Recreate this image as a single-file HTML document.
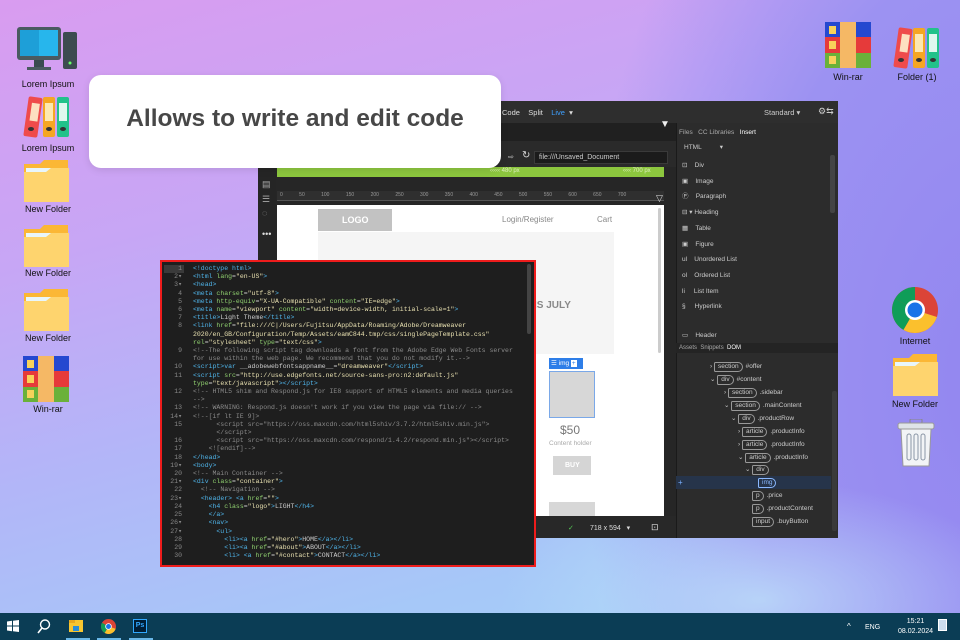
<!DOCTYPE html>
<html><head><meta charset="utf-8">
<style>
*{margin:0;padding:0;box-sizing:border-box}
body{width:960px;height:640px;overflow:hidden;position:relative;font-family:"Liberation Sans",sans-serif;
background:linear-gradient(165deg,#d99cf0 0%,#c7a6f5 30%,#b2b6f8 55%,#a6c8f8 80%,#a2d2f6 100%);}
.abs{position:absolute}
.bgR{position:absolute;left:0;top:0;width:960px;height:640px;background:radial-gradient(ellipse 420px 700px at 1000px 380px,#9286f0 0%,#9c92f2 60%,rgba(160,150,245,0) 100%);}
.bgW{position:absolute;left:0;top:0;width:960px;height:640px;background:radial-gradient(ellipse 260px 120px at 760px 600px,rgba(190,225,250,.8),rgba(190,225,250,0));}
.lbl{position:absolute;font-size:9px;color:#111;text-align:center;width:80px;}
.win{left:258px;top:101px;width:580px;height:437px;background:#262626}
.t{position:absolute;font-size:7px;color:#ccc;white-space:nowrap}
.code{left:160px;top:260px;width:376px;height:307px;background:#1e1e1e;border:2px solid #ee1c1c;overflow:hidden}
pre{font-family:"Liberation Mono",monospace;font-size:6.5px;line-height:8.2px;color:#ccc;position:absolute}
.tg{color:#4fb3e8}.at{color:#8fcf6f}.st{color:#e8e0b0}.cm{color:#8a8a8a}
.dom{position:absolute;font-size:6.5px;color:#ccc;white-space:nowrap}
.tag{display:inline-block;border:1px solid #999;border-radius:2px 6px 6px 2px;padding:0 3px;margin-right:3px;color:#ccc;font-size:6.5px;line-height:8px}
</style></head><body>
<div class="bgR"></div><div class="bgW"></div>

<svg class="abs" style="left:15px;top:27px" width="64" height="48" viewBox="0 0 64 48">
<rect x="2" y="0" width="44" height="33" rx="3" fill="#4a5a60"/><rect x="5" y="3" width="38" height="26" fill="#27b6ec"/><rect x="5" y="3" width="19" height="26" fill="#1e9fd8"/>
<rect x="19" y="33" width="10" height="7" fill="#3a4a50"/><rect x="12" y="40" width="24" height="3" fill="#4a5a60"/>
<rect x="48" y="5" width="14" height="37" rx="2" fill="#3d4b50"/><circle cx="55" cy="36" r="1.5" fill="#6f6"/></svg>
<div class="lbl" style="left:8px;top:79px">Lorem Ipsum</div>
<svg class="abs" style="left:23px;top:95px" width="48" height="44" viewBox="0 0 48 44">
<rect x="3" y="2" width="14" height="40" rx="2" fill="#ef4b4b" transform="rotate(8 10 22)"/><rect x="20" y="2" width="12" height="40" rx="2" fill="#f5a623"/><rect x="34" y="2" width="12" height="40" rx="2" fill="#22c28a"/>
<rect x="22" y="8" width="8" height="18" fill="#fde8b0"/><rect x="36" y="8" width="8" height="18" fill="#e0f8ee"/><rect x="7" y="8" width="8" height="18" fill="#fde0c0" transform="rotate(8 10 22)"/>
<ellipse cx="26" cy="34" rx="3" ry="2" fill="#333"/><ellipse cx="40" cy="34" rx="3" ry="2" fill="#333"/><ellipse cx="8" cy="34" rx="3" ry="2" fill="#333"/></svg>
<div class="lbl" style="left:8px;top:143px">Lorem Ipsum</div>
<svg class="abs" style="left:23px;top:160px" width="48" height="42" viewBox="0 0 48 42"><path d="M1 4h16l4 -4h24v40H1z" fill="#fbb735"/><rect x="3" y="8" width="42" height="6" fill="#e8f6fb"/><path d="M1 12h22l5 -4h18v34H1z" fill="#fed46e"/></svg>
<div class="lbl" style="left:8px;top:204px">New Folder</div>
<svg class="abs" style="left:23px;top:225px" width="48" height="42" viewBox="0 0 48 42"><path d="M1 4h16l4 -4h24v40H1z" fill="#fbb735"/><rect x="3" y="8" width="42" height="6" fill="#e8f6fb"/><path d="M1 12h22l5 -4h18v34H1z" fill="#fed46e"/></svg>
<div class="lbl" style="left:8px;top:268px">New Folder</div>
<svg class="abs" style="left:23px;top:289px" width="48" height="42" viewBox="0 0 48 42"><path d="M1 4h16l4 -4h24v40H1z" fill="#fbb735"/><rect x="3" y="8" width="42" height="6" fill="#e8f6fb"/><path d="M1 12h22l5 -4h18v34H1z" fill="#fed46e"/></svg>
<div class="lbl" style="left:8px;top:333px">New Folder</div>
<svg class="abs" style="left:23px;top:356px" width="46" height="46" viewBox="0 0 46 46">
<rect width="46" height="15" fill="#2548d0"/><rect y="15" width="46" height="16" fill="#e63a3a"/><rect y="31" width="46" height="15" fill="#6ab13a"/><rect x="15" width="16" height="46" fill="#f5b865"/><rect x="4" y="4" width="7" height="8" fill="#f8d25a"/><rect x="4" y="19" width="7" height="8" fill="#f8d25a"/><rect x="4" y="34" width="7" height="8" fill="#f8d25a"/></svg>
<div class="lbl" style="left:8px;top:404px">Win-rar</div>

<svg class="abs" style="left:825px;top:22px" width="46" height="46" viewBox="0 0 46 46">
<rect width="46" height="15" fill="#2548d0"/><rect y="15" width="46" height="16" fill="#e63a3a"/><rect y="31" width="46" height="15" fill="#6ab13a"/><rect x="15" width="16" height="46" fill="#f5b865"/><rect x="4" y="4" width="7" height="8" fill="#f8d25a"/><rect x="4" y="19" width="7" height="8" fill="#f8d25a"/><rect x="4" y="34" width="7" height="8" fill="#f8d25a"/></svg>
<div class="lbl" style="left:808px;top:72px">Win-rar</div>
<svg class="abs" style="left:893px;top:26px" width="48" height="44" viewBox="0 0 48 44">
<rect x="3" y="2" width="14" height="40" rx="2" fill="#ef4b4b" transform="rotate(8 10 22)"/><rect x="20" y="2" width="12" height="40" rx="2" fill="#f5a623"/><rect x="34" y="2" width="12" height="40" rx="2" fill="#22c28a"/>
<rect x="22" y="8" width="8" height="18" fill="#fde8b0"/><rect x="36" y="8" width="8" height="18" fill="#e0f8ee"/><rect x="7" y="8" width="8" height="18" fill="#fde0c0" transform="rotate(8 10 22)"/>
<ellipse cx="26" cy="34" rx="3" ry="2" fill="#333"/><ellipse cx="40" cy="34" rx="3" ry="2" fill="#333"/><ellipse cx="8" cy="34" rx="3" ry="2" fill="#333"/></svg>
<div class="lbl" style="left:877px;top:72px">Folder (1)</div>
<svg class="abs" style="left:892px;top:287px" width="46" height="46" viewBox="0 0 46 46">
<circle cx="23" cy="23" r="23" fill="#db4437"/><path d="M23 23L3.1 11.5A23 23 0 0 0 11.5 42.9z" fill="#0f9d58"/><path d="M23 23L11.5 42.9A23 23 0 0 0 44.9 30z" fill="#fbc02d"/><path d="M23 23L3.1 11.5A23 23 0 0 1 23 0z" fill="#0f9d58"/>
<circle cx="23" cy="23" r="10" fill="#fff"/><circle cx="23" cy="23" r="7.5" fill="#1a73e8"/></svg>
<div class="lbl" style="left:875px;top:336px">Internet</div>
<svg class="abs" style="left:892px;top:354px" width="48" height="42" viewBox="0 0 48 42"><path d="M1 4h16l4 -4h24v40H1z" fill="#fbb735"/><rect x="3" y="8" width="42" height="6" fill="#e8f6fb"/><path d="M1 12h22l5 -4h18v34H1z" fill="#fed46e"/></svg>
<div class="lbl" style="left:875px;top:399px">New Folder</div>
<svg class="abs" style="left:897px;top:419px" width="38" height="48" viewBox="0 0 38 48">
<rect x="13" y="0" width="12" height="4" rx="1" fill="none" stroke="#888"/><rect x="1" y="4" width="36" height="6" rx="2" fill="#dfe3e8" stroke="#999"/><path d="M4 10h30l-2 37H6z" fill="#f2f4f6" stroke="#999"/>
<rect x="10" y="15" width="4" height="26" rx="2" fill="none" stroke="#8a96a6"/><rect x="17" y="15" width="4" height="26" rx="2" fill="none" stroke="#8a96a6"/><rect x="24" y="15" width="4" height="26" rx="2" fill="none" stroke="#8a96a6"/></svg>

<div class="abs win">
 <div class="abs" style="left:0;top:0;width:580px;height:22px;background:#2e2e2e"></div>
 <div class="t" style="left:244px;top:7px;font-size:7.5px;color:#ddd">Code&nbsp;&nbsp;&nbsp;&nbsp;Split&nbsp;&nbsp;&nbsp;&nbsp;<span style="color:#3ea0ff">Live</span>&nbsp;&nbsp;▾</div>
 <div class="t" style="left:506px;top:7px;font-size:7.5px">Standard ▾</div>
 <div class="t" style="left:560px;top:5px;font-size:9px">⚙⇆</div>
 <div class="abs" style="left:0;top:22px;width:418px;height:18px;background:#202020"></div>
 <div class="abs" style="left:0;top:40px;width:418px;height:26px;background:#2a2a2a"></div>
 <div class="t" style="left:402px;top:18px;font-size:10px;color:#eee">▼</div>
 <div class="t" style="left:250px;top:52px">⇨</div>
 <div class="t" style="left:264px;top:49px;font-size:10px;color:#ddd">↻</div>
 <div class="abs" style="left:276px;top:50px;width:134px;height:13px;background:#1b1b1b;border:1px solid #3a3a3a"></div>
 <div class="t" style="left:281px;top:53px">file:///Unsaved_Document</div>
 <div class="abs" style="left:19px;top:66px;width:387px;height:10px;background:#8cc63e"></div>
 <div class="t" style="left:232px;top:67px;font-size:6px;color:#dfefc0">‹‹‹‹‹ 480 px</div>
 <div class="t" style="left:365px;top:67px;font-size:6px;color:#dfefc0">‹‹‹‹ 700 px</div>
 <div class="abs" style="left:19px;top:90px;width:387px;height:10px;background:#2f2f2f;border-bottom:1px solid #555"></div>
 <div class="t" style="left:22px;top:91px;font-size:5px;color:#999;word-spacing:15px">0 50 100 150 200 250 300 350 400 450 500 550 600 650 700</div>
 <div class="t" style="left:398px;top:92px;font-size:9px;color:#ddd">▽</div>
 <div class="abs" style="left:0;top:22px;width:18px;height:414px;background:#252525"></div>
 <div class="t" style="left:4px;top:78px;font-size:9px;color:#aaa">▤</div>
 <div class="t" style="left:4px;top:93px;font-size:9px;color:#aaa">☰</div>
 <div class="t" style="left:4px;top:107px;font-size:9px;color:#aaa">◌</div>
 <div class="t" style="left:4px;top:128px;font-size:9px;color:#ddd">•••</div>
 <div class="abs" style="left:19px;top:104px;width:387px;height:311px;background:#fff"></div>
 <div class="abs" style="left:400px;top:107px;width:3px;height:145px;background:#ccc;border-radius:2px"></div>
 <div class="abs" style="left:60px;top:108px;width:74px;height:22px;background:#c2c2c2"></div>
 <div class="t" style="left:84px;top:114px;font-size:9px;color:#fff;font-weight:bold">LOGO</div>
 <div class="t" style="left:244px;top:114px;font-size:8px;color:#888">Login/Register</div>
 <div class="t" style="left:339px;top:114px;font-size:8px;color:#888">Cart</div>
 <div class="abs" style="left:60px;top:131px;width:296px;height:122px;background:#f5f5f5"></div>
 <div class="t" style="left:276px;top:199px;font-size:10px;color:#888;font-weight:bold">IS JULY</div>
 <div class="abs" style="left:291px;top:257px;width:34px;height:11px;background:#2e7ee8"></div>
 <div class="t" style="left:293px;top:258px;font-size:6.5px;color:#fff">☰ img <span style="background:#fff;color:#2e7ee8;padding:0 1px">+</span></div>
 <div class="abs" style="left:291px;top:270px;width:46px;height:47px;background:#d7d7d7;border:1px solid #7aa8e8"></div>
 <div class="t" style="left:302px;top:322px;font-size:12px;color:#777">$50</div>
 <div class="t" style="left:291px;top:339px;font-size:6.5px;color:#aaa">Content holder</div>
 <div class="abs" style="left:295px;top:355px;width:38px;height:19px;background:#d5d5d5"></div>
 <div class="t" style="left:307px;top:361px;font-size:7px;color:#fff;font-weight:bold">BUY</div>
 <div class="abs" style="left:291px;top:401px;width:46px;height:14px;background:#d7d7d7"></div>
 <div class="abs" style="left:19px;top:415px;width:399px;height:22px;background:#282828"></div>
 <div class="t" style="left:310px;top:423px;color:#5c5">✓</div>
 <div class="t" style="left:332px;top:423px;color:#ddd">718 x 594&nbsp;&nbsp;&nbsp;▾</div>
 <div class="t" style="left:393px;top:421px;color:#ddd;font-size:9px">⊡</div>
 <div class="abs" style="left:418px;top:22px;width:162px;height:415px;background:#2c2c2c;border-left:1px solid #1a1a1a"></div>
 <div class="t" style="left:421px;top:28px;font-size:6.5px;color:#aaa">Files&nbsp;&nbsp;&nbsp;CC Libraries&nbsp;&nbsp;&nbsp;<span style="color:#fff">Insert</span></div>
 <div class="t" style="left:426px;top:42px;font-size:6.5px">HTML&nbsp;&nbsp;&nbsp;&nbsp;&nbsp;&nbsp;&nbsp;&nbsp;&nbsp;&nbsp;▾</div>
 <div class="abs" style="left:572px;top:54px;width:5px;height:58px;background:#444;border-radius:2px"></div>
 <div class="t" style="left:424px;top:57px;font-size:6.5px;line-height:15.7px;color:#ccc">
 ⊡&nbsp;&nbsp;&nbsp;&nbsp;Div<br>▣&nbsp;&nbsp;&nbsp;&nbsp;Image<br>Ⓟ&nbsp;&nbsp;&nbsp;&nbsp;Paragraph<br>⊟ ▾ Heading<br>▦&nbsp;&nbsp;&nbsp;&nbsp;Table<br>▣&nbsp;&nbsp;&nbsp;&nbsp;Figure<br>ul&nbsp;&nbsp;&nbsp;&nbsp;Unordered List<br>ol&nbsp;&nbsp;&nbsp;&nbsp;Ordered List<br>li&nbsp;&nbsp;&nbsp;&nbsp;&nbsp;List Item<br>§&nbsp;&nbsp;&nbsp;&nbsp;&nbsp;Hyperlink</div>
 <div class="t" style="left:424px;top:230px;font-size:6.5px">▭&nbsp;&nbsp;&nbsp;&nbsp;Header</div>
 <div class="abs" style="left:418px;top:242px;width:162px;height:10px;background:#242424"></div>
 <div class="t" style="left:421px;top:244px;font-size:6px;color:#aaa">Assets&nbsp;&nbsp;Snippets&nbsp;&nbsp;<span style="color:#fff">DOM</span></div>
 <div class="abs" style="left:418px;top:375px;width:155px;height:13px;background:#26344a"></div>
 <div class="abs" style="left:574px;top:290px;width:5px;height:140px;background:#3a3a3a;border-radius:2px"></div>
 <div class="dom" style="left:452px;top:261px">› <span class="tag">section</span>#offer</div>
 <div class="dom" style="left:452px;top:274px">⌄ <span class="tag">div</span>#content</div>
 <div class="dom" style="left:466px;top:287px">› <span class="tag">section</span>.sidebar</div>
 <div class="dom" style="left:466px;top:300px">⌄ <span class="tag">section</span>.mainContent</div>
 <div class="dom" style="left:473px;top:313px">⌄ <span class="tag">div</span>.productRow</div>
 <div class="dom" style="left:480px;top:326px">› <span class="tag">article</span>.productInfo</div>
 <div class="dom" style="left:480px;top:339px">› <span class="tag">article</span>.productInfo</div>
 <div class="dom" style="left:480px;top:352px">⌄ <span class="tag">article</span>.productInfo</div>
 <div class="dom" style="left:487px;top:364px">⌄ <span class="tag">div</span></div>
 <div class="dom" style="left:420px;top:377px;color:#7ab0ff;font-size:8px">+</div>
 <div class="dom" style="left:500px;top:377px"><span class="tag" style="color:#8ab8ff;border-color:#8ab8ff">img</span></div>
 <div class="dom" style="left:494px;top:390px"><span class="tag">p</span>.price</div>
 <div class="dom" style="left:494px;top:403px"><span class="tag">p</span>.productContent</div>
 <div class="dom" style="left:494px;top:416px"><span class="tag">input</span>.buyButton</div>
</div>

<div class="abs" style="left:89px;top:75px;width:412px;height:93px;background:#fff;border-radius:12px;box-shadow:0 2px 8px rgba(0,0,0,.1)"></div>
<div class="abs" style="left:89px;top:105px;width:412px;text-align:center;font-size:24.5px;font-weight:bold;color:#474747;font-family:'Liberation Sans',sans-serif">Allows to write and edit code</div>

<div class="abs code">
<div class="abs" style="left:2px;top:3px;width:20px;height:8px;background:#3a3a3a"></div>
<div class="abs" style="left:365px;top:2px;width:4px;height:70px;background:#444;border-radius:2px"></div>
<pre style="left:0;top:3px;width:20px;text-align:right;color:#888">1
2▾
3▾
4
5
6
7
8


9

10
11

12

13
14▾
15

16
17
18
19▾
20
21▾
22
23▾
24
25
26▾
27▾
28
29
30</pre>
<pre style="left:31px;top:3px"><span class="tg">&lt;!doctype html&gt;</span>
<span class="tg">&lt;html</span> <span class="at">lang</span>=<span class="st">"en-US"</span><span class="tg">&gt;</span>
<span class="tg">&lt;head&gt;</span>
<span class="tg">&lt;meta</span> <span class="at">charset</span>=<span class="st">"utf-8"</span><span class="tg">&gt;</span>
<span class="tg">&lt;meta</span> <span class="at">http-equiv</span>=<span class="st">"X-UA-Compatible"</span> <span class="at">content</span>=<span class="st">"IE=edge"</span><span class="tg">&gt;</span>
<span class="tg">&lt;meta</span> <span class="at">name</span>=<span class="st">"viewport"</span> <span class="at">content</span>=<span class="st">"width=device-width, initial-scale=1"</span><span class="tg">&gt;</span>
<span class="tg">&lt;title&gt;</span>Light Theme<span class="tg">&lt;/title&gt;</span>
<span class="tg">&lt;link</span> <span class="at">href</span>=<span class="st">"file:///C|/Users/Fujitsu/AppData/Roaming/Adobe/Dreamweaver
2020/en_GB/Configuration/Temp/Assets/eamC844.tmp/css/singlePageTemplate.css"</span>
<span class="at">rel</span>=<span class="st">"stylesheet"</span> <span class="at">type</span>=<span class="st">"text/css"</span><span class="tg">&gt;</span>
<span class="cm">&lt;!--The following script tag downloads a font from the Adobe Edge Web Fonts server
for use within the web page. We recommend that you do not modify it.--&gt;</span>
<span class="tg">&lt;script&gt;</span><span class="tg">var</span> __adobewebfontsappname__=<span class="st">"dreamweaver"</span><span class="tg">&lt;/script&gt;</span>
<span class="tg">&lt;script</span> <span class="at">src</span>=<span class="st">"http://use.edgefonts.net/source-sans-pro:n2:default.js"</span>
<span class="at">type</span>=<span class="st">"text/javascript"</span><span class="tg">&gt;&lt;/script&gt;</span>
<span class="cm">&lt;!-- HTML5 shim and Respond.js for IE8 support of HTML5 elements and media queries
--&gt;
&lt;!-- WARNING: Respond.js doesn't work if you view the page via file:// --&gt;
&lt;!--[if lt IE 9]&gt;
      &lt;script src="https://oss.maxcdn.com/html5shiv/3.7.2/html5shiv.min.js"&gt;
      &lt;/script&gt;
      &lt;script src="https://oss.maxcdn.com/respond/1.4.2/respond.min.js"&gt;&lt;/script&gt;
    &lt;![endif]--&gt;</span>
<span class="tg">&lt;/head&gt;</span>
<span class="tg">&lt;body&gt;</span>
<span class="cm">&lt;!-- Main Container --&gt;</span>
<span class="tg">&lt;div</span> <span class="at">class</span>=<span class="st">"container"</span><span class="tg">&gt;</span>
  <span class="cm">&lt;!-- Navigation --&gt;</span>
  <span class="tg">&lt;header&gt;</span> <span class="tg">&lt;a</span> <span class="at">href</span>=<span class="st">""</span><span class="tg">&gt;</span>
    <span class="tg">&lt;h4</span> <span class="at">class</span>=<span class="st">"logo"</span><span class="tg">&gt;</span>LIGHT<span class="tg">&lt;/h4&gt;</span>
    <span class="tg">&lt;/a&gt;</span>
    <span class="tg">&lt;nav&gt;</span>
      <span class="tg">&lt;ul&gt;</span>
        <span class="tg">&lt;li&gt;&lt;a</span> <span class="at">href</span>=<span class="st">"#hero"</span><span class="tg">&gt;</span>HOME<span class="tg">&lt;/a&gt;&lt;/li&gt;</span>
        <span class="tg">&lt;li&gt;&lt;a</span> <span class="at">href</span>=<span class="st">"#about"</span><span class="tg">&gt;</span>ABOUT<span class="tg">&lt;/a&gt;&lt;/li&gt;</span>
        <span class="tg">&lt;li&gt;</span> <span class="tg">&lt;a</span> <span class="at">href</span>=<span class="st">"#contact"</span><span class="tg">&gt;</span>CONTACT<span class="tg">&lt;/a&gt;&lt;/li&gt;</span></pre>
</div>

<div class="abs" style="left:0;top:613px;width:960px;height:27px;background:#0b3d55"></div>
<svg class="abs" style="left:7px;top:620px" width="12" height="12" viewBox="0 0 12 12"><path d="M0 1.5l5-.7v4.7H0zM6 .7l6-.7v5.5H6zM0 6.5h5v4.7l-5-.7zM6 6.5h6V12l-6-.8z" fill="#fff"/></svg>
<svg class="abs" style="left:37px;top:619px" width="14" height="15" viewBox="0 0 14 15"><circle cx="8" cy="5.5" r="4.5" fill="none" stroke="#fff" stroke-width="1.4"/><path d="M5 9L1 14" stroke="#fff" stroke-width="1.6"/></svg>
<svg class="abs" style="left:69px;top:619px" width="14" height="14" viewBox="0 0 14 14"><rect x="0" y="1" width="14" height="12" fill="#f8c630"/><rect x="0" y="1" width="6" height="3" fill="#e8a820"/><rect x="4" y="7" width="6" height="5" fill="#2a8ed6"/></svg>
<div class="abs" style="left:66px;top:638px;width:24px;height:2px;background:#6ab7e8"></div>
<svg class="abs" style="left:101px;top:619px" width="15" height="15" viewBox="0 0 46 46"><circle cx="23" cy="23" r="23" fill="#db4437"/><path d="M23 23L3.1 11.5A23 23 0 0 0 11.5 42.9z" fill="#0f9d58"/><path d="M23 23L11.5 42.9A23 23 0 0 0 44.9 30z" fill="#fbc02d"/><circle cx="23" cy="23" r="10" fill="#fff"/><circle cx="23" cy="23" r="7.5" fill="#1a73e8"/></svg>
<div class="abs" style="left:97px;top:638px;width:24px;height:2px;background:#6ab7e8"></div>
<div class="abs" style="left:133px;top:619px;width:14px;height:14px;background:#001e36;border:1px solid #31a8ff;color:#31a8ff;font-size:7px;font-weight:bold;text-align:center;line-height:12px">Ps</div>
<div class="abs" style="left:129px;top:638px;width:24px;height:2px;background:#6ab7e8"></div>
<div class="t" style="left:847px;top:622px;color:#fff;font-size:8px">^</div>
<div class="t" style="left:865px;top:624px;color:#fff;font-size:7px">ENG</div>
<div class="t" style="left:898px;top:617px;color:#fff;font-size:7px;text-align:center;line-height:10px">15:21<br>08.02.2024</div>
<div class="abs" style="left:938px;top:619px;width:9px;height:12px;border:1px solid #fff;background:#cde"></div>
</body></html>
